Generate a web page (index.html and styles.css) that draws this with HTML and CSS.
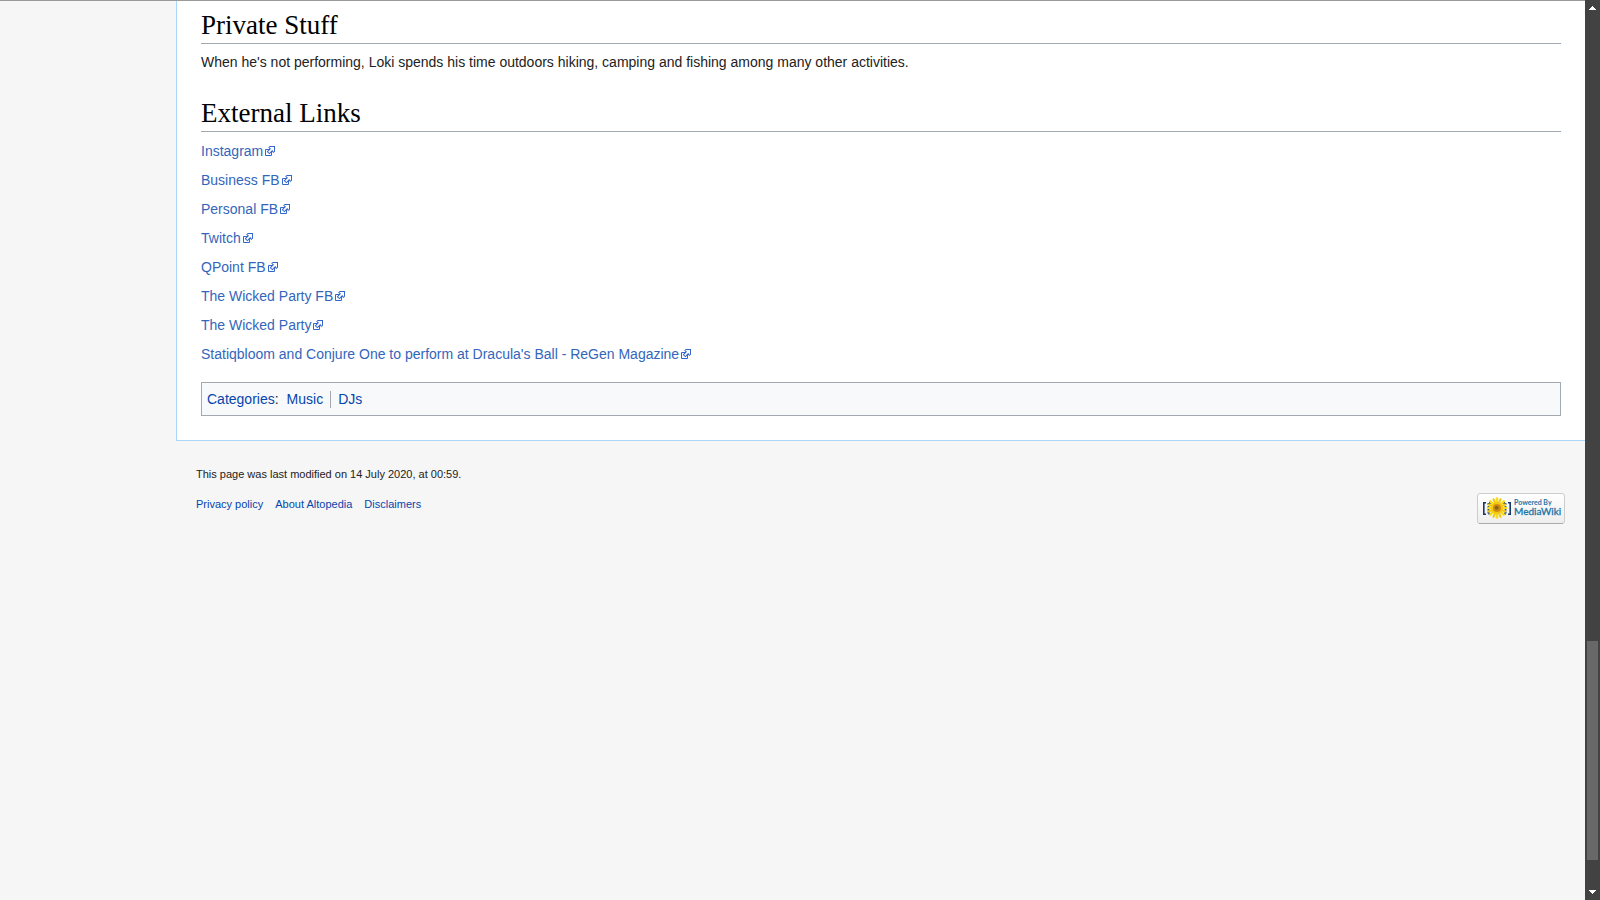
FILE: index.html
```html
<!DOCTYPE html>
<html lang="en">
<head>
<meta charset="utf-8">
<title>Altopedia</title>
<link rel="stylesheet" href="styles.css">
</head>
<body>
<svg class="defs" aria-hidden="true">
  <symbol id="external" viewBox="0 0 12 12">
    <path fill="#fff" stroke="#36c" d="M1.5 4.518h5.982V10.5H1.5z"/>
    <path fill="#36c" d="M5.765 1H11v5.39L9.427 7.937l-1.31-1.31L5.393 9.35l-2.69-2.688 2.81-2.808L4.2 2.544z"/>
    <path fill="#fff" d="M9.995 2.004l.022 4.885L8.2 5.07 5.32 7.95 4.09 6.723l2.882-2.88-1.85-1.852z"/>
  </symbol>
</svg>
<div class="page">
  <main class="content">
    <h2>Private Stuff</h2>
    <p>When he's not performing, Loki spends his time outdoors hiking, camping and fishing among many other activities.</p>
    <h2 class="next">External Links</h2>
    <ul class="links">
      <li><a href="#">Instagram<svg><use href="#external"/></svg></a></li>
      <li><a href="#">Business FB<svg><use href="#external"/></svg></a></li>
      <li><a href="#">Personal FB<svg><use href="#external"/></svg></a></li>
      <li><a href="#">Twitch<svg><use href="#external"/></svg></a></li>
      <li><a href="#">QPoint FB<svg><use href="#external"/></svg></a></li>
      <li><a href="#">The Wicked Party FB<svg><use href="#external"/></svg></a></li>
      <li><a href="#">The Wicked Party<svg><use href="#external"/></svg></a></li>
      <li><a href="#">Statiqbloom and Conjure One to perform at Dracula's Ball - ReGen Magazine<svg><use href="#external"/></svg></a></li>
    </ul>
    <div class="categories">
      <span><a href="#">Categories</a>:</span>
      <ul>
        <li><a href="#">Music</a></li>
        <li><a href="#">DJs</a></li>
      </ul>
    </div>
  </main>
  <footer class="footer">
    <div>
      <p>This page was last modified on 14 July 2020, at 00:59.</p>
      <ul>
        <li><a href="#">Privacy policy</a></li>
        <li><a href="#">About Altopedia</a></li>
        <li><a href="#">Disclaimers</a></li>
      </ul>
    </div>
    <a class="badge" href="#" aria-label="Powered by MediaWiki">
      <svg width="88" height="31" viewBox="0 0 88 31">
        <defs>
          <linearGradient id="plate" x1="0" y1="0" x2="0" y2="1">
            <stop offset="0" stop-color="#fff"/>
            <stop offset="1" stop-color="#eee"/>
          </linearGradient>
        </defs>
        <rect x=".5" y=".5" width="87" height="30" rx="2.5" fill="url(#plate)" stroke="#ccc"/>
        <path d="M2 30.5h84" stroke="#aaa"/>
        <g fill="none" stroke="#16396e">
          <path stroke-width="1.6" d="M9 9.8H6.8v11.4H9M31 9.8h2.200v11.400H31"/>
          <path stroke-width="1.8" stroke-dasharray="2 .8" d="M14 9.800h-2.500v11.400H14M26 9.800h2.500v11.400H26"/>
        </g>
        <g stroke="#f8dc1c" stroke-width="2.600" stroke-linecap="round">
          <path d="M20 5.500v19M11 15h18M13.300 8.300l13.400 13.400M26.700 8.300L13.300 21.700"/>
          <path stroke="#efc810" stroke-width="2" d="M16.500 6.200l7 17.600M23.500 6.200l-7 17.600M11.700 11.500l16.600 7M28.300 11.500l-16.600 7"/>
        </g>
        <circle cx="20" cy="15" r="6" fill="#f4c80f"/>
        <circle cx="20" cy="15" r="4" fill="#d08c12"/>
        <circle cx="19.700" cy="14.700" r="2" fill="#8a6516"/>
        <text class="small" x="37" y="12">Powered By</text>
        <text class="large" x="37" y="22">MediaWiki</text>
      </svg>
    </a>
  </footer>
</div>
<div class="scrollbar" aria-hidden="true">
  <svg width="15" height="16" viewBox="0 0 15 16" shape-rendering="crispEdges"><path fill="#fff" d="M7 6h1v1h1v1h1v1h1v1H4V9h1V8h1V7h1z"/></svg>
  <div class="track"><div class="thumb"></div></div>
  <svg width="15" height="16" viewBox="0 0 15 16" shape-rendering="crispEdges"><path fill="#fff" d="M4 6h7v1h-1v1H9v1H8v1H7V9H6V8H5V7H4z"/></svg>
</div>
</body>
</html>
```
FILE: styles.css
```css
* { box-sizing: border-box; }
body {
  margin: 0;
  display: flex;
  min-height: 100vh;
  background: #f6f6f6;
  color: #222;
  font: 14px/22px "Liberation Sans", Arial, sans-serif;
}
h2, p, ul { margin: 0; padding: 0; font-weight: normal; }
ul { list-style: none; }
a { color: #0645ad; text-decoration: none; }
a:hover { text-decoration: underline; }
.defs { position: absolute; width: 0; height: 0; }

.page { flex: 1; min-width: 0; border-top: 1px solid #999; }
.content {
  margin-left: 176px;
  padding: 8px 24px 24px;
  background: #fff;
  border: 1px solid #a7d7f9;
  border-width: 0 0 1px 1px;
}
.content h2 {
  padding-bottom: 2px;
  margin-bottom: 7px;
  border-bottom: 1px solid #a2a9b1;
  color: #000;
  font: 27px/32px Georgia, "Liberation Serif", serif;
}
.content .next { margin-top: 24px; }
.links { display: grid; gap: 7px; padding-top: 1px; }
.links a { color: #36b; }
.links svg { width: 12px; height: 12px; margin-left: 1px; vertical-align: -1px; }

.categories {
  display: flex;
  margin-top: 17px;
  padding: 5px;
  background: #f8f9fa;
  border: 1px solid #a2a9b1;
}
.categories ul { display: flex; align-items: center; }
.categories li { padding: 0 7px 0 8px; line-height: 17px; }
.categories li + li { padding-left: 7px; border-left: 1px solid #a2a9b1; }

.footer {
  display: flex;
  justify-content: space-between;
  align-items: flex-end;
  margin-left: 176px;
  padding: 24px 20px;
  font-size: 11px;
  line-height: 18px;
}
.footer ul { display: flex; gap: 12px; margin: 12px 0 11px; }
.badge svg { display: block; }
.small, .large { font-family: Lato, sans-serif; fill: #1b74a8; }
.small { font-size: 7px; font-weight: bold; }
.large { font-size: 10px; stroke: #1b74a8; stroke-width: .3px; }

.scrollbar {
  display: flex;
  flex-direction: column;
  width: 15px;
  height: 100vh;
  background: #424242;
}
.track { flex: 1; display: flex; flex-direction: column; justify-content: flex-end; padding: 0 2px 24px; }
.thumb { height: 26%; background: #686868; }
```
